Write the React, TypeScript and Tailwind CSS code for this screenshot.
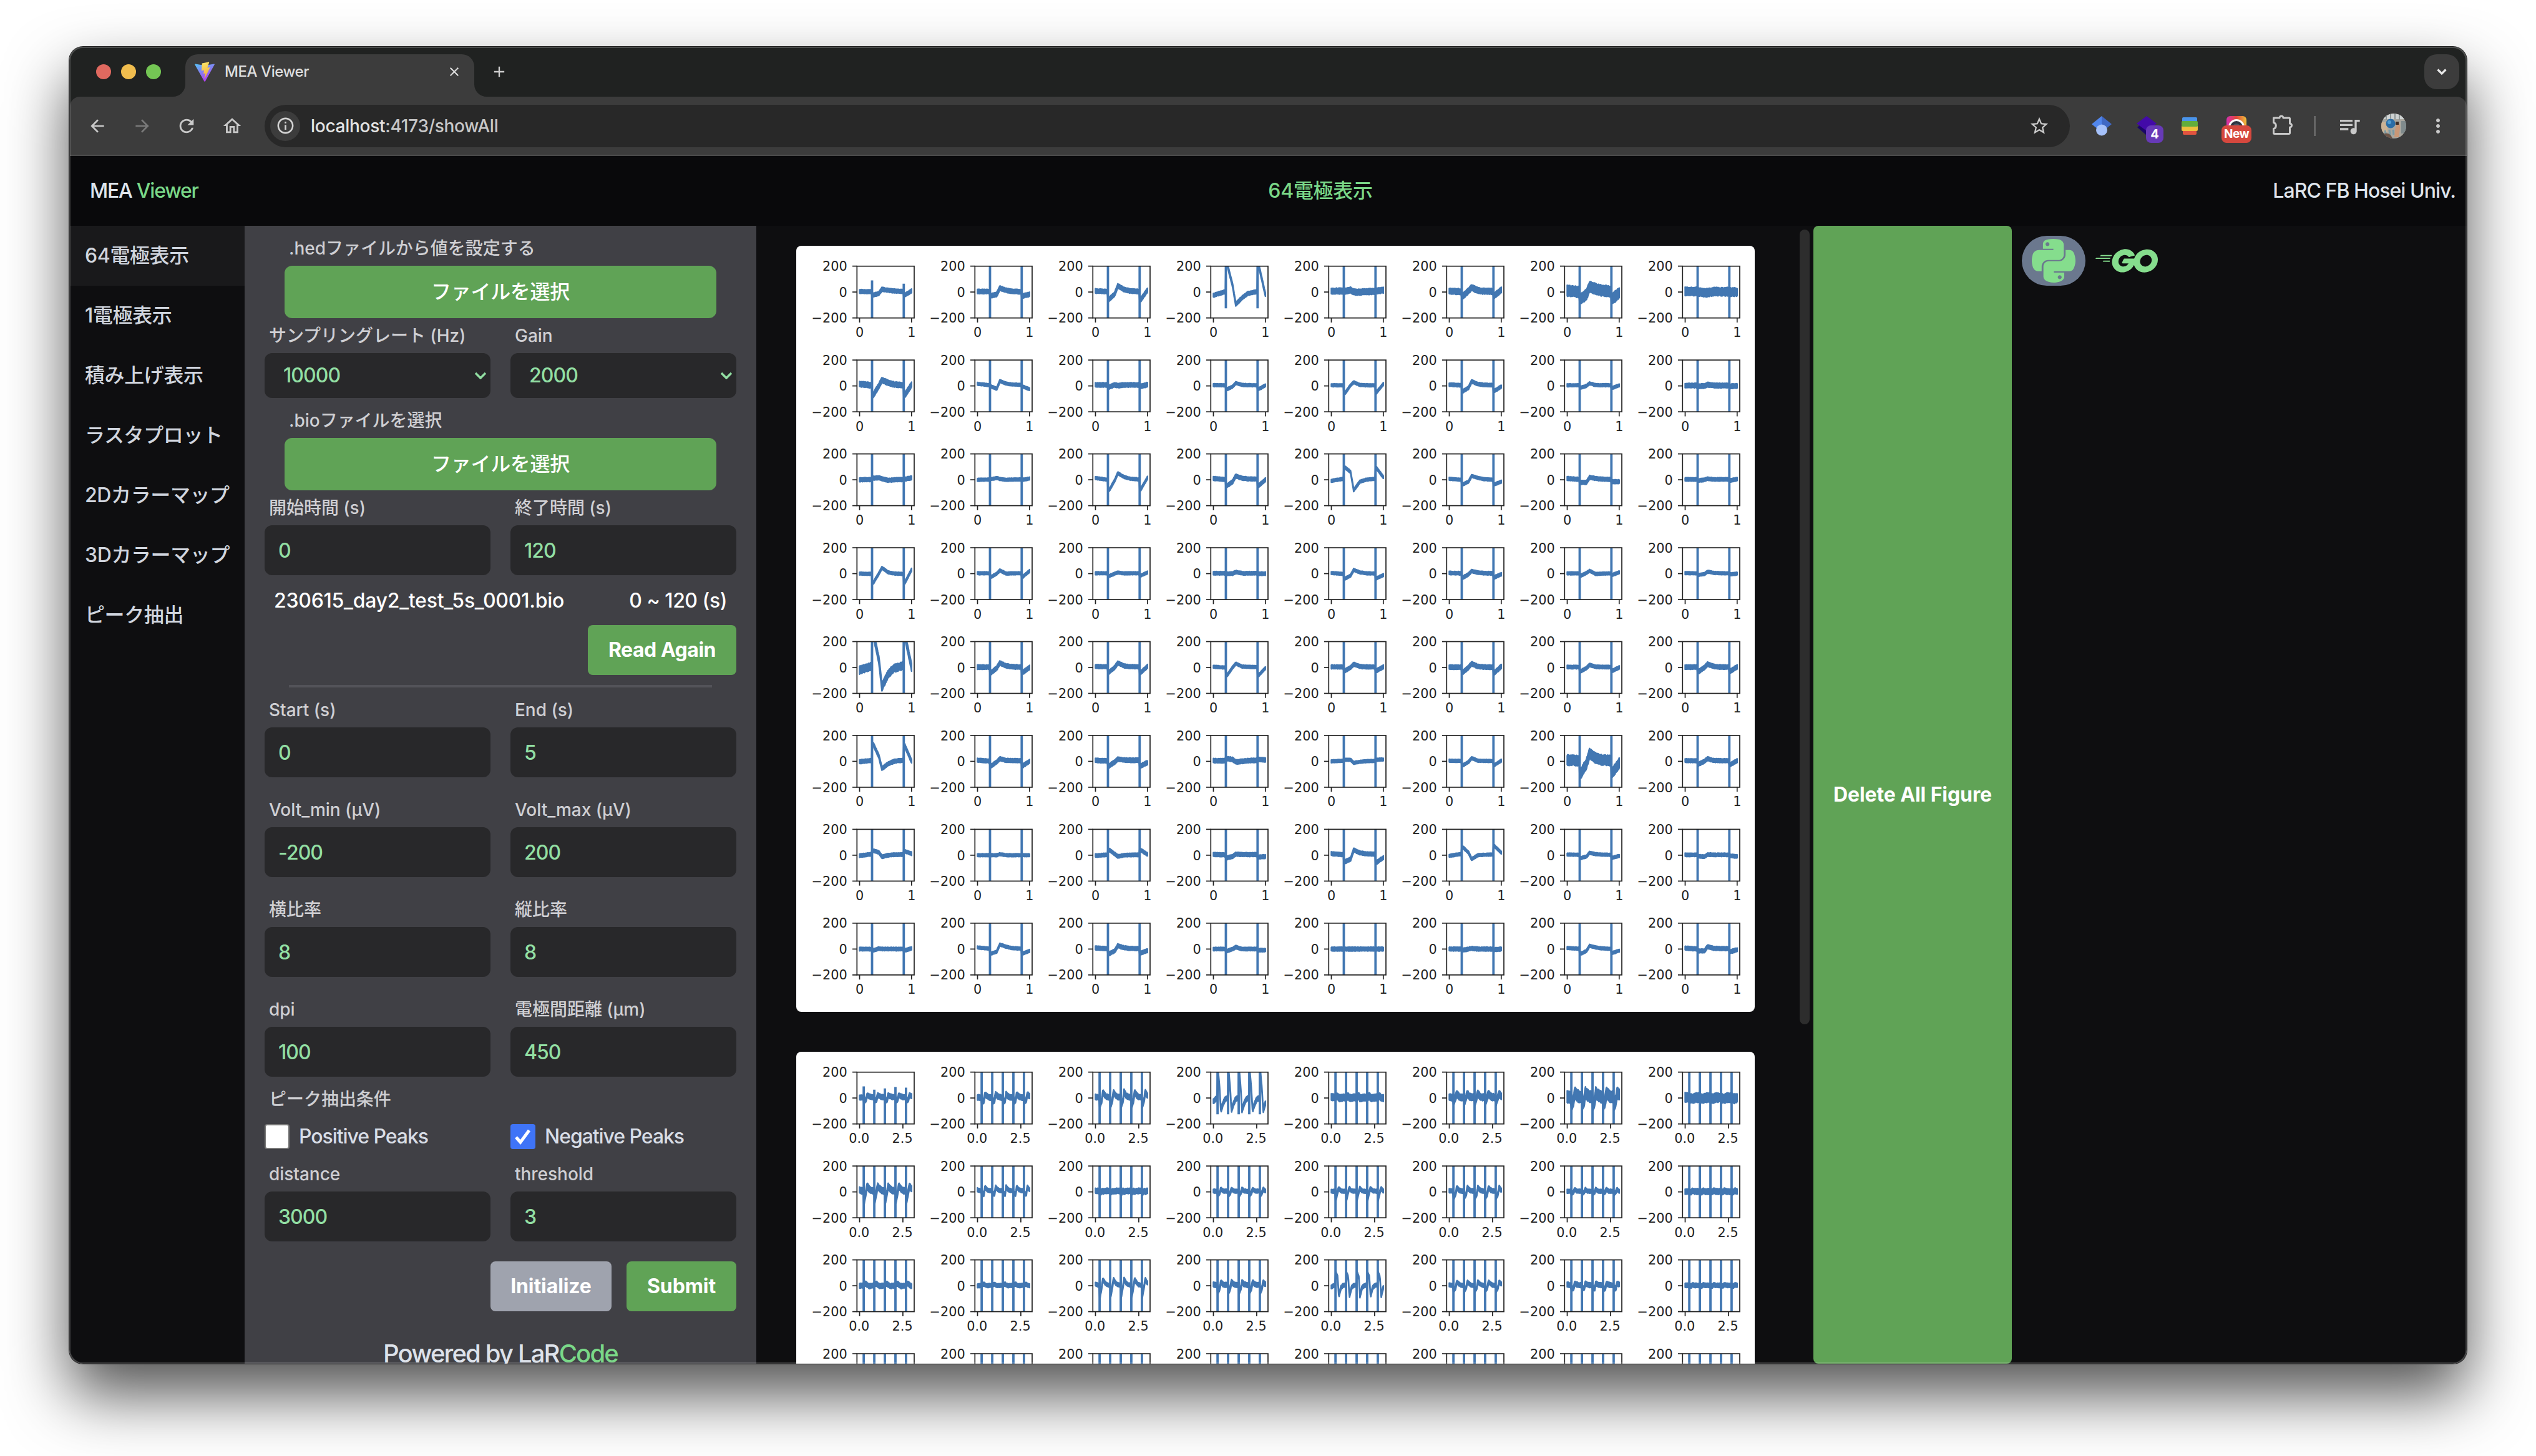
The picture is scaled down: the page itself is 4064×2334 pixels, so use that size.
import React from "react";
import { FaPython } from "react-icons/fa6";
import { SiGo } from "react-icons/si";
import {
  MdArrowBack,
  MdArrowForward,
  MdRefresh,
  MdOutlineHome,
  MdStarOutline,
  MdQueueMusic,
  MdMoreVert,
  MdInfoOutline,
  MdClose,
  MdAdd,
} from "react-icons/md";

/* ---------- electrode traces ---------- */

const SPIKES = [0.24, 0.85, 1.46, 2.07, 2.68];
const BLUE = "#4277b2";

// [noise, start, before spike | after spike, rise, peak, decay, settled | after 2nd spike, end]
const TRACES: number[][] = [
  [12, 5, 3, -22, -12, 22, 14, 5, -22, 8],
  [14, 5, 4, -28, -18, 30, 14, 2, -30, -18],
  [14, 8, 4, -55, -15, 48, 20, 4, -60, 15],
  [12, -25, 5, 215, 50, -95, -45, 5, 210, -20],
  [20, 8, 8, 8, 15, 0, 0, 5, 8, 15],
  [20, 8, 3, -30, 10, 35, 12, 5, -25, 15],
  [40, 10, 0, -50, -20, 40, 25, 5, -50, -10],
  [30, 5, 5, 0, -5, -5, 3, 3, 0, 0],

  [18, 15, 5, -70, 0, 45, 25, 5, -70, 10],
  [8, 16, 6, -5, -22, 38, 18, 8, -5, -25],
  [14, 8, 8, -8, 8, 2, 8, 8, -3, 10],
  [8, 6, 5, -25, -5, 22, 8, 5, -25, 5],
  [8, 5, 5, -55, 5, 28, 8, 4, -50, 15],
  [10, 10, 5, -40, -15, 35, 14, 6, -38, -5],
  [8, 5, 5, -12, 0, 20, 6, 5, -15, 5],
  [15, 3, 3, -3, 0, 10, 3, 3, -3, 0],

  [12, 0, 2, 12, 16, 8, -4, 2, 5, 15],
  [8, 0, 2, 6, 14, 6, 0, 3, 0, 10],
  [8, 14, 0, -80, -5, 50, 22, 2, -75, 15],
  [12, 10, 3, -45, -15, 30, 12, 5, -45, 0],
  [8, -8, 8, 95, 60, -80, -15, 8, 90, 20],
  [8, 8, 0, -35, -15, 30, 15, 0, -35, -15],
  [12, 10, 3, -20, -20, 18, 10, 3, -15, -15],
  [10, 3, 3, -5, 0, 8, 3, 3, -5, 5],

  [8, 0, -2, -70, 0, 45, 10, -3, -70, 30],
  [8, 3, 3, -25, 0, 25, 0, 3, -25, 20],
  [8, 3, 3, -18, 0, 8, 2, 3, -15, 8],
  [10, 3, 3, 0, 0, 12, 3, 3, 0, 0],
  [8, 5, -2, -38, -15, 28, 10, 0, -35, -12],
  [10, 5, 2, -30, -5, 20, 8, 2, -28, -5],
  [8, 2, 2, -15, 5, 22, -3, 2, -10, 10],
  [8, 4, 2, -10, -3, 15, 6, 2, -5, 0],

  [28, -20, 10, 260, 60, -150, -50, 15, 250, 0],
  [14, 3, 3, -38, -5, 35, 12, 3, -38, 0],
  [12, 8, 5, -35, 0, 35, 12, 5, -40, 8],
  [8, 5, 0, -60, 0, 30, 8, 3, -60, -5],
  [12, 5, 3, -25, 0, 25, 8, 3, -25, 5],
  [14, 3, 2, -35, 0, 30, 8, 2, -40, 8],
  [10, 3, 3, -28, -5, 20, 5, 3, -25, 0],
  [14, 3, 3, -30, 0, 25, 8, 3, -28, 5],

  [12, -3, 8, 130, 40, -55, -20, 10, 120, 0],
  [12, 8, 3, -35, -5, 20, 8, 5, -35, 0],
  [14, 8, 3, -35, -5, 18, 10, 8, -35, -10],
  [14, 5, 5, 20, 15, -5, 0, 8, 15, 12],
  [8, 0, 5, 12, 12, -12, -3, 3, 12, 15],
  [8, 5, 3, -30, -5, 25, 5, 3, -28, 5],
  [38, 10, 5, -90, -20, 60, 25, 5, -85, -15],
  [12, 6, 5, -20, 0, 20, 6, 5, -25, 5],

  [10, -3, 8, 35, 22, -12, 0, 5, 30, 12],
  [8, 0, 0, 0, 0, 8, 0, 0, 0, 0],
  [10, -3, 3, 40, 10, -10, 0, 3, 40, 5],
  [12, 5, 3, -20, -10, 8, 5, 5, -15, -10],
  [12, 12, 3, -50, -30, 40, 18, 8, -55, -20],
  [8, -5, 10, 60, 20, -30, 0, 5, 70, 20],
  [8, 5, 3, -22, -10, 18, 8, 3, -20, -5],
  [10, 3, 3, -8, -12, 5, 3, 3, -5, -10],

  [10, 0, 0, -10, 3, 0, 0, 0, -10, 5],
  [8, 12, 3, -35, -20, 35, 18, 3, -35, -15],
  [12, 8, 3, -35, -15, 25, 10, 3, -30, -12],
  [10, 0, 0, -15, 0, 15, 0, 0, -10, -8],
  [12, 0, 0, 0, 0, 0, 0, 0, 0, 0],
  [12, 0, 0, -8, 0, 5, 0, 0, -5, 0],
  [8, 8, 2, -35, -15, 25, 12, 2, -30, -12],
  [12, 8, 0, -15, -15, 18, 6, 3, -20, -5],
];

const AX_W = 91.7;
const AX_H = 83;
const PITCH_X = 189;
const PITCH_Y = 150.45;

function noise(i: number) {
  const s = Math.sin(i * 127.1 + 11.7) * 43758.5453;
  return s - Math.floor(s);
}

function lerpTable(pts: number[][], t: number) {
  for (let i = 1; i < pts.length; i++) {
    if (t <= pts[i][0]) {
      const [a, va] = pts[i - 1];
      const [b, vb] = pts[i];
      return va + ((vb - va) * (t - a)) / (b - a || 1);
    }
  }
  return pts[pts.length - 1][1];
}

function level(tr: number[], t: number, span: number) {
  const [, v0, v1, a, b, c, d, e, a2, end] = tr;
  if (t < SPIKES[0]) return lerpTable([[0, v0], [0.24, v1]], t);
  if (span === 1 && t >= SPIKES[1]) return lerpTable([[0.85, a2], [0.87, a2], [1, end]], t);
  const u = (t - SPIKES[0]) % 0.61;
  return lerpTable([[0, a], [0.025, a], [0.13, b], [0.19, c], [0.31, d], [0.42, (d + 2 * e) / 3], [0.61, e]], u);
}

function Axes({ index, span }: { index: number; span: number }) {
  const tr = TRACES[index];
  const px = (t: number) => 4.2 + (t / span) * 83.3;
  const py = (v: number) => AX_H / 2 - (v / 200) * (AX_H / 2);
  const half = tr[0] + (span === 1 ? 4 : 8);
  const steps = 100;
  const up: string[] = [];
  const down: string[] = [];
  for (let i = 0; i <= steps; i++) {
    const t = (i / steps) * span;
    const v = level(tr, t, span);
    const j1 = noise(i + index * 97) * half * 0.25;
    const j2 = noise(i * 3 + index * 31) * half * 0.25;
    up.push(`${px(t).toFixed(1)},${py(v + half - j1).toFixed(1)}`);
    down.unshift(`${px(t).toFixed(1)},${py(v - half + j2).toFixed(1)}`);
  }
  const x = 97.3 + (index % 8) * PITCH_X;
  const y = 32.7 + Math.floor(index / 8) * PITCH_Y;
  const ticks = span === 1 ? [[0, "0"], [1, "1"]] : [[0, "0.0"], [2.5, "2.5"]];
  const spikes = SPIKES.filter((s) => s < span);
  return (
    <g>
      <svg x={x} y={y} width={AX_W} height={AX_H}>
        <polygon points={up.concat(down).join(" ")} fill={BLUE} stroke={BLUE} strokeWidth={2.4} strokeLinejoin="round" />
        {spikes.map((s, i) => {
          const top = index === 0 ? [90, 65, 75, 85, 80][i] : 210;
          const bottom = index === 3 ? -125 : -210;
          return <line key={s} x1={px(s)} x2={px(s)} y1={py(top)} y2={py(bottom)} stroke={BLUE} strokeWidth={3.8} />;
        })}
      </svg>
      <rect x={x} y={y} width={AX_W} height={AX_H} fill="none" stroke="#222" strokeWidth={1.7} />
      {[200, 0, -200].map((v) => (
        <g key={v}>
          <line x1={x - 7.3} x2={x} y1={y + py(v)} y2={y + py(v)} stroke="#222" strokeWidth={1.7} />
          <text x={x - 15.6} y={y + py(v) + 7.6} textAnchor="end">
            {v < 0 ? `−${-v}` : v}
          </text>
        </g>
      ))}
      {ticks.map(([v, label]) => (
        <g key={label}>
          <line x1={x + px(+v)} x2={x + px(+v)} y1={y + AX_H} y2={y + AX_H + 7.3} stroke="#222" strokeWidth={1.7} />
          <text x={x + px(+v) - (span === 1 ? 0 : 0.8)} y={y + AX_H + 30.5} textAnchor="middle">
            {label}
          </text>
        </g>
      ))}
    </g>
  );
}

function Figure({ span, rows }: { span: number; rows: number }) {
  return (
    <div className="h-[1228px] w-[1536px] shrink-0 overflow-hidden rounded-lg bg-white">
      <svg width="1536" height="1228" viewBox="0 0 1536 1228" fill="#222" className="font-['DejaVu_Sans'] text-[20.8px]">
        {TRACES.slice(0, rows * 8).map((_, i) => (
          <Axes key={i} index={i} span={span} />
        ))}
      </svg>
    </div>
  );
}

/* ---------- browser chrome ---------- */

function ViteLogo() {
  return (
    <svg width="32" height="32" viewBox="0 0 32 32">
      <defs>
        <linearGradient id="viteBody" x1="0" y1="0" x2="0.5" y2="1">
          <stop offset="0" stopColor="#55c3f5" />
          <stop offset="1" stopColor="#b23df0" />
        </linearGradient>
        <linearGradient id="viteBolt" x1="0.4" y1="0" x2="0.6" y2="1">
          <stop offset="0" stopColor="#fbe566" />
          <stop offset="1" stopColor="#f2a93b" />
        </linearGradient>
      </defs>
      <path d="M31.8 4.6 16.8 31.4c-.3.6-1.1.6-1.4 0L.2 4.6c-.3-.6.2-1.3.9-1.2l15 2.7 14.8-2.7c.7-.1 1.2.6.9 1.2Z" fill="url(#viteBody)" />
      <path d="M22.8.3 12 2.4c-.2 0-.3.2-.3.4L11 14c0 .3.2.5.5.4l3-.7c.3-.1.5.2.5.5l-.9 4.4c-.1.3.2.5.5.4l1.9-.5c.3-.1.6.2.5.5l-1.4 6.9c-.1.4.5.7.7.3l8.2-16.7c.2-.3-.1-.6-.5-.6l-3.1.6c-.3.1-.5-.2-.4-.5L23.3.8c.1-.3-.2-.5-.5-.5Z" fill="url(#viteBolt)" />
    </svg>
  );
}

function TabStrip() {
  return (
    <div className="flex h-20 shrink-0 items-start bg-[#202221]">
      <div className="flex h-20 w-[185px] gap-4 pl-[42px] pt-7">
        <span className="size-6 rounded-full bg-[#e0695f]" />
        <span className="size-6 rounded-full bg-[#f0bd4e]" />
        <span className="size-6 rounded-full bg-[#74c654]" />
      </div>
      <div className="relative mt-3 flex h-[68px] w-[463px] items-center rounded-t-[20px] bg-[#3c3c3c] pb-3 pl-[15px] pr-[20px]">
        <svg className="absolute -left-5 bottom-0" width="20" height="20" viewBox="0 0 20 20">
          <path d="M20 0V20H0A20 20 0 0 0 20 0Z" fill="#3c3c3c" />
        </svg>
        <svg className="absolute -right-5 bottom-0" width="20" height="20" viewBox="0 0 20 20">
          <path d="M0 0V20H20A20 20 0 0 1 0 0Z" fill="#3c3c3c" />
        </svg>
        <ViteLogo />
        <span className="ml-4 text-[24px] leading-none tracking-[-0.018em] text-[#dedede]">MEA Viewer</span>
        <MdClose className="ml-auto size-6 text-[#dedede]" />
      </div>
      <MdAdd className="ml-[26px] mt-[26px] size-7 text-[#cfcfcf]" />
      <div className="ml-auto mr-3 mt-3 flex size-14 items-center justify-center rounded-[20px] bg-[#3c3c3c]">
        <svg width="16" height="11" viewBox="0 0 16 11" fill="none" stroke="#e8e8e8" strokeWidth="3.2">
          <path d="m1.500 1.500 6.500 6.500 6.500-6.500" />
        </svg>
      </div>
    </div>
  );
}

function ScholarIcon() {
  return (
    <svg width="32" height="32" viewBox="0 0 32 32">
      <path d="M16 0 0 13l8 6.5a9 9 0 0 1 8-5Z" fill="#5186ec" />
      <path d="M16 0 32 13l-8 6.5a9 9 0 0 0-8-5Z" fill="#3f68c4" />
      <circle cx="16" cy="22.5" r="9" fill="#a5c1fa" />
    </svg>
  );
}

function DiamondIcon() {
  return (
    <div className="relative size-8">
      <svg width="32" height="32" viewBox="0 0 32 32">
        <path d="m16 6 15 12-15 13L1 18Z" fill="#1b0668" />
        <path d="m16 0 16 12-16 12L0 12Z" fill="#430aa8" />
      </svg>
      <span className="absolute left-[15px] top-[15px] flex h-7 w-7 items-center justify-center rounded-lg bg-[#673ab7] text-[20px] font-bold leading-none text-white">
        4
      </span>
    </div>
  );
}

function StackIcon() {
  return (
    <svg width="26" height="28" viewBox="0 0 26 28">
      <rect x="1" width="24" height="9" rx="2" fill="#4a94ea" />
      <rect x="2" y="19" width="22" height="9" rx="2" fill="#e2543f" />
      <rect x="0" y="13" width="26" height="9" rx="2" fill="#efbe3d" />
      <rect x="0" y="6" width="26" height="9" rx="2" fill="#62ad3c" />
    </svg>
  );
}

function RainbowIcon() {
  return (
    <div className="relative h-8 w-12">
      <svg className="absolute left-2 top-0" width="32" height="18" viewBox="0 0 32 18">
        <defs>
          <linearGradient id="rainbow">
            <stop offset="0" stopColor="#d62fb0" />
            <stop offset="0.5" stopColor="#e0493a" />
            <stop offset="1" stopColor="#f0c03c" />
          </linearGradient>
        </defs>
        <path d="M0 18V6a6 6 0 0 1 6-6h20a6 6 0 0 1 6 6v12Z" fill="url(#rainbow)" />
        <path d="M3 18a13 13 0 0 1 26 0Z" fill="#fff" />
        <path d="M6 18a10 10 0 0 1 20 0Z" fill="#2c3440" />
        <path d="M10 18a6 6 0 0 1 12 0Z" fill="#4d5866" />
      </svg>
      <span className="absolute left-0 top-[15px] flex h-7 w-12 items-center justify-center rounded-lg bg-[#d6483e] text-[19px] font-bold leading-none tracking-[-0.03em] text-white">
        New
      </span>
    </div>
  );
}

function PuzzleIcon() {
  return (
    <svg width="34" height="34" viewBox="0 0 34 34" fill="none" stroke="#c9c9c9" strokeWidth="3" strokeLinejoin="round">
      <path d="M2.5 6H12a3 3 0 0 1 6 0h9a1.5 1.5 0 0 1 1.5 1.5V15a3 3 0 0 1 0 6v9a1.5 1.5 0 0 1-1.5 1.5H4A1.5 1.5 0 0 1 2.5 30v-6.5a5.2 5.2 0 0 0 0-10Z" />
    </svg>
  );
}

function Avatar() {
  return (
    <svg width="40" height="40" viewBox="0 0 40 40" className="overflow-hidden rounded-full">
      <rect width="40" height="40" fill="#a9a79f" />
      <path d="M0 0h40v9H0Z" fill="#cfd3d3" />
      <path d="M8 0v10M15 0v8M22 0v9M29 0v10" stroke="#8e9696" strokeWidth="2" />
      <path d="M0 14h10v16H0Z" fill="#cbb294" />
      <circle cx="15" cy="16" r="7.5" fill="#2a6da6" />
      <circle cx="13" cy="14" r="3" fill="#4f9bd0" />
      <path d="M6 27 9 40M13 26l2 14M19 26l1 8" stroke="#7a9aa4" strokeWidth="3" />
      <path d="M25 17c3-3 6 0 5 7l-2 14h-7l1-12Z" fill="#c99776" />
      <path d="M23 13h5v5h-5Z" fill="#3a2c25" />
      <path d="M3 33c8-3 12 0 15 7H3Z" fill="#6b5346" />
      <path d="M32 12h8v20h-8Z" fill="#7f8a8c" />
    </svg>
  );
}

function Toolbar() {
  return (
    <div className="shrink-0 bg-[#202221]">
      <div className="flex h-[95px] items-center rounded-t-[16px] border-b-2 border-[#4b4b4b] bg-[#3c3c3c] pl-7 pr-7">
        <MdArrowBack className="size-8 text-[#c9c9c9]" />
        <MdArrowForward className="ml-10 size-8 text-[#797979]" />
        <MdRefresh className="ml-[38px] size-[34px] text-[#c9c9c9]" />
        <MdOutlineHome className="ml-[39px] size-[34px] text-[#c9c9c9]" />
        <div className="ml-[35px] flex h-[68px] w-[2893px] items-center rounded-full bg-[#282828] pl-[9px] pr-8">
          <span className="flex size-12 items-center justify-center rounded-full bg-[#3c3c3c]">
            <MdInfoOutline className="size-[31px] text-[#d4d4d4]" />
          </span>
          <span className="ml-[17px] text-[28px] leading-none tracking-[-0.01em] text-[#e3e3e3]">
            localhost<span className="text-[#c7c7c7]">:4173/showAll</span>
          </span>
          <MdStarOutline className="ml-auto size-[34px] text-[#c9c9c9]" />
        </div>
        <div className="ml-[35px] flex flex-1 items-center">
          <ScholarIcon />
          <span className="ml-[40px]"><DiamondIcon /></span>
          <span className="ml-[40px]"><StackIcon /></span>
          <span className="ml-[38px]"><RainbowIcon /></span>
          <span className="mb-1 ml-[33px]"><PuzzleIcon /></span>
          <span className="ml-[33px] h-8 w-[3px] bg-[#666]" />
          <MdQueueMusic className="ml-[34px] size-10 text-[#c9c9c9]" />
          <span className="ml-[31px]"><Avatar /></span>
          <MdMoreVert className="ml-auto size-9 text-[#c9c9c9]" />
        </div>
      </div>
    </div>
  );
}

/* ---------- page ---------- */

const MENU = ["64電極表示", "1電極表示", "積み上げ表示", "ラスタプロット", "2Dカラーマップ", "3Dカラーマップ", "ピーク抽出"];

function Label({ children }: { children: React.ReactNode }) {
  return <div className="flex h-10 items-center whitespace-nowrap pl-[7px] text-[28px] font-medium leading-10 tracking-[-0.001em] text-[#cfcfd3]">{children}</div>;
}

function Field({ label, value }: { label: string; value: string }) {
  return (
    <div className="flex w-[362px] flex-col gap-2">
      <Label>{label}</Label>
      <div className="flex h-20 items-center rounded-xl bg-[#28282a] px-[22px] pt-px text-[32px] leading-none tracking-[-0.03em] text-[#92dfa3]">{value}</div>
    </div>
  );
}

function Select({ label, value }: { label: string; value: string }) {
  return (
    <div className="flex w-[362px] flex-col gap-2">
      <Label>{label}</Label>
      <div className="flex h-[72px] items-center justify-between rounded-xl bg-[#28282a] pl-[30px] pr-[6px] text-[32px] leading-none tracking-[-0.03em] text-[#92dfa3]">
        {value}
        <svg width="20" height="12" viewBox="0 0 20 12" fill="none" stroke="#92dfa3" strokeWidth="3.5">
          <path d="m2 2 8 8 8-8" />
        </svg>
      </div>
    </div>
  );
}

function FileButton({ label }: { label: string }) {
  return (
    <div className="flex flex-col gap-2 px-8">
      <Label>{label}</Label>
      <button className="h-[84px] rounded-xl bg-[#60a356] text-[32px] font-medium leading-none tracking-[-0.01em] text-white">ファイルを選択</button>
    </div>
  );
}

function Pair({ children }: { children: React.ReactNode }) {
  return <div className="flex justify-between">{children}</div>;
}

function Check({ label, checked }: { label: string; checked?: boolean }) {
  return (
    <div className="flex h-10 w-[362px] items-center gap-[15px]">
      {checked ? (
        <span className="flex size-10 items-center justify-center rounded-[4px] bg-[#3f74f7]">
          <svg width="32" height="32" viewBox="0 0 32 32" fill="none" stroke="#fff" strokeWidth="5">
            <path d="m5 17 7 8L26 6" />
          </svg>
        </span>
      ) : (
        <span className="size-10 rounded-[4px] border-2 border-[#767676] bg-white" />
      )}
      <span className="text-[32px] leading-none tracking-[-0.033em] text-[#d8dde6]">{label}</span>
    </div>
  );
}

function SettingsPanel() {
  return (
    <section className="flex w-[820px] shrink-0 flex-col overflow-hidden bg-[#404045] px-8 pt-4">
      <FileButton label=".hedファイルから値を設定する" />
      <div className="mt-2">
        <Pair>
          <Select label="サンプリングレート (Hz)" value="10000" />
          <Select label="Gain" value="2000" />
        </Pair>
      </div>
      <div className="mt-4">
        <FileButton label=".bioファイルを選択" />
      </div>
      <div className="mt-2">
        <Pair>
          <Field label="開始時間 (s)" value="0" />
          <Field label="終了時間 (s)" value="120" />
        </Pair>
      </div>
      <div className="flex h-20 shrink-0 items-center justify-between px-[15px] pt-px text-[32px] text-white">
        <span className="tracking-[-0.008em]">230615_day2_test_5s_0001.bio</span>
        <span className="tracking-[-0.015em]">0 ~ 120 (s)</span>
      </div>
      <button className="h-20 w-[238px] shrink-0 self-end rounded-lg bg-[#60a356] text-[32px] font-bold leading-none tracking-[-0.015em] text-white">Read Again</button>
      <div className="mt-4 h-1 w-[678px] shrink-0 self-center bg-[#535359]" />
      <div className="mt-4 flex flex-col gap-8">
        <Pair>
          <Field label="Start (s)" value="0" />
          <Field label="End (s)" value="5" />
        </Pair>
        <Pair>
          <Field label="Volt_min (μV)" value="-200" />
          <Field label="Volt_max (μV)" value="200" />
        </Pair>
        <Pair>
          <Field label="横比率" value="8" />
          <Field label="縦比率" value="8" />
        </Pair>
        <Pair>
          <Field label="dpi" value="100" />
          <Field label="電極間距離 (μm)" value="450" />
        </Pair>
      </div>
      <div className="mt-4">
        <Label>ピーク抽出条件</Label>
      </div>
      <div className="mt-5">
        <Pair>
          <Check label="Positive Peaks" />
          <Check label="Negative Peaks" checked />
        </Pair>
      </div>
      <div className="mt-5">
        <Pair>
          <Field label="distance" value="3000" />
          <Field label="threshold" value="3" />
        </Pair>
      </div>
      <div className="mt-8 flex justify-end gap-6 text-[32px] font-bold leading-none tracking-[-0.003em] text-white">
        <button className="h-20 w-[194px] rounded-lg bg-[#9fa3ae]">Initialize</button>
        <button className="h-20 w-44 rounded-lg bg-[#60a356]">Submit</button>
      </div>
      <div className="mt-10 h-14 shrink-0 text-center text-[40px] leading-[56px] tracking-[-0.046em] text-[#dde2ea]">
        Powered by LaR<span className="text-[#7ad888]">Code</span>
      </div>
    </section>
  );
}

export default function App() {
  return (
    <div className="h-[2334px] w-[4064px] overflow-hidden bg-white pl-[111px] pt-[75px] font-['Inter','Noto_Sans_CJK_JP',sans-serif] font-medium">
      <div className="relative h-[2111px] w-[3842px] rounded-[22px] shadow-[0_50px_100px_rgba(0,0,0,0.68),0_0_0_1px_#222]">
        <div className="flex h-full w-full flex-col overflow-hidden rounded-[22px] bg-[#0e0e10] pl-px">
          <TabStrip />
          <Toolbar />
          <header className="grid h-[112px] shrink-0 grid-cols-3 items-center bg-[#09090b] pl-8 pr-[18px] text-[32px] leading-none text-[#dfe4ec]">
            <span className="tracking-[-0.038em]">
              MEA <span className="text-[#7ad888]">Viewer</span>
            </span>
            <span className="pl-[153px] text-center tracking-[-0.01em] text-[#7ad888]">64電極表示</span>
            <span className="text-right tracking-[-0.03em]">LaRC FB Hosei Univ.</span>
          </header>
          <main className="flex min-h-0 flex-1">
            <nav className="w-[280px] shrink-0 text-[32px] leading-none tracking-[-0.012em] text-[#d0d5de]">
              {MENU.map((item, i) => (
                <div key={item} className={i === 0 ? "flex h-24 items-center whitespace-nowrap bg-[#19191b] pl-6" : "flex h-24 items-center whitespace-nowrap pl-6"}>
                  {item}
                </div>
              ))}
            </nav>
            <SettingsPanel />
            <section className="flex w-[1672px] shrink-0 flex-col gap-16 overflow-hidden pl-16 pt-8">
              <Figure span={1} rows={8} />
              <Figure span={3} rows={4} />
            </section>
            <div className="w-[22px] shrink-0 pt-[6px]">
              <div className="h-[1274px] w-4 rounded-full bg-[#2d2d2d]" />
            </div>
            <button className="w-[318px] shrink-0 rounded-lg bg-[#60a356] text-[32px] font-bold leading-none tracking-[-0.003em] text-white">Delete All Figure</button>
            <aside className="flex items-start pl-4 pt-4 text-[#85dd8d]">
              <span className="flex h-20 w-[102px] items-center justify-center rounded-full bg-[#6b788e]">
                <FaPython className="h-20 w-[70px]" />
              </span>
              <span className="ml-4 flex h-20 items-center">
                <SiGo className="size-[100px]" />
              </span>
            </aside>
          </main>
        </div>
        <div className="pointer-events-none absolute inset-0 rounded-[22px] border-2 border-white/20" />
      </div>
    </div>
  );
}
